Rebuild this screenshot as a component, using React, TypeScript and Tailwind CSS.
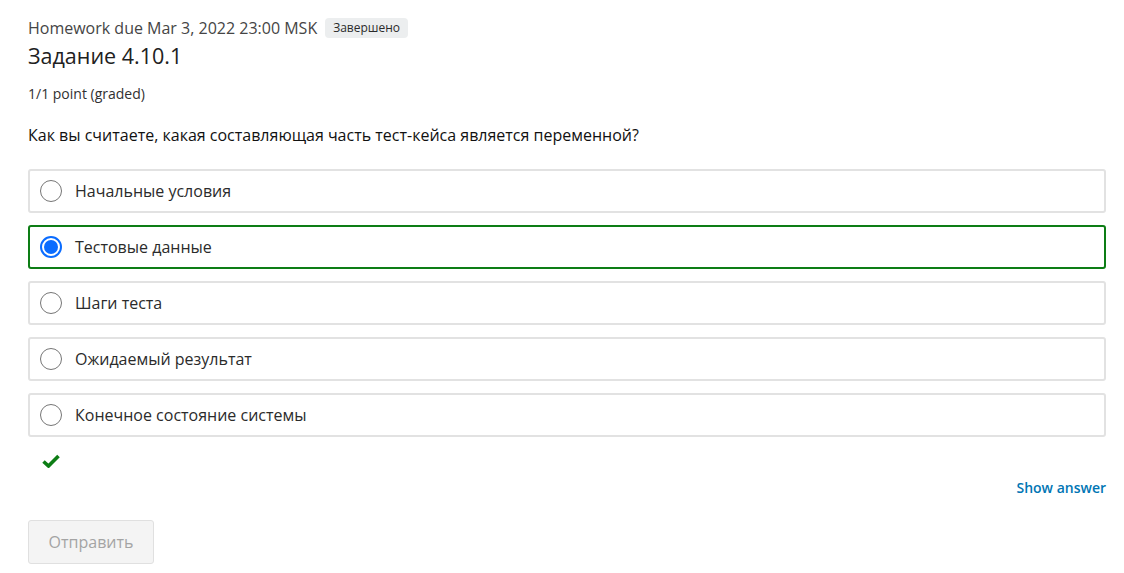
const options = [
  "Начальные условия",
  "Тестовые данные",
  "Шаги теста",
  "Ожидаемый результат",
  "Конечное состояние системы",
];

const selected = 1;

const App = () => {
  return (
    <div
      className="w-[1124px] h-[573px] bg-white text-[#313131] pl-[28px] pr-[18px] pt-[17px]"
      style={{ fontFamily: '"Open Sans", sans-serif' }}
    >
      <div className="flex items-center gap-x-2 h-[22px]">
        <p className="text-[16px] text-[#454545]">Homework due Mar 3, 2022 23:00 MSK</p>
        <span className="rounded-[4px] bg-[#eceeef] px-[8px] h-[20px] leading-[20px] text-[12px] text-[#2b2b2b]">
          Завершено
        </span>
      </div>
      <h2 className="text-[21.5px] leading-[30px] mt-[2px] text-[#212121]">Задание 4.10.1</h2>
      <p className="text-[14px] leading-[18px] mt-[14px] text-[#313131]">1/1 point (graded)</p>
      <p className="text-[16px] leading-[20px] mt-[22px] text-[#111]">
        Как вы считаете, какая составляющая часть тест-кейса является переменной?
      </p>

      <div className="flex flex-col gap-y-[12px] mt-[24px]">
        {options.map((o, i) => (
          <div
            key={o}
            className={
              i === selected
                ? "h-[44px] rounded-[3px] border-2 border-[#0d7d15] flex items-center pl-[10px]"
                : "h-[44px] rounded-[3px] border-2 border-[#e2e2e2] flex items-center pl-[10px]"
            }
          >
            {i === selected ? (
              <span className="w-[22px] h-[22px] rounded-full border-2 border-[#0a6cff] flex items-center justify-center">
                <span className="w-[14px] h-[14px] rounded-full bg-[#0a6cff]"></span>
              </span>
            ) : (
              <span className="w-[22px] h-[22px] rounded-full border border-[#767676]"></span>
            )}
            <span className="ml-[13px] text-[16px] text-[#2b2b2b]">{o}</span>
          </div>
        ))}
      </div>

      <div className="mt-[17px] ml-[14px] h-[16px]">
        <svg width="18" height="14" viewBox="0 0 18 14">
          <path d="M1.5 7.5 L6.5 12 L16.5 2" stroke="#0d7d15" strokeWidth="3.6" fill="none" />
        </svg>
      </div>

      <div className="flex justify-end mt-[7px]">
        <span className="text-[14px] font-semibold text-[#0075b4]">Show answer</span>
      </div>

      <button className="mt-[22px] w-[126px] h-[44px] rounded-[3px] border border-[#e0e0e0] bg-[#f4f4f4] text-[16px] text-[#a4a4a4]">
        Отправить
      </button>
    </div>
  );
};

export default App;
